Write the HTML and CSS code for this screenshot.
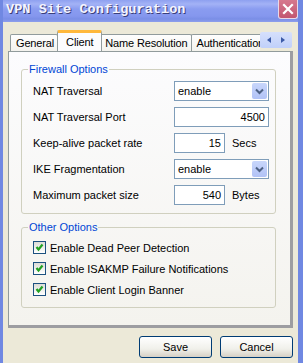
FILE: index.html
```html
<!DOCTYPE html>
<html lang="en">
<head>
    <meta charset="UTF-8">
    <title>VPN Site Configuration</title>
    <link rel="stylesheet" href="styles.css">
</head>
<body>
    <div class="window">
        <div class="titlebar">
            <span class="title">VPN Site Configuration</span>
            <span class="close">
                <svg width="12" height="12" viewBox="0 0 12 12"><path d="M2 2L10 10M10 2L2 10" stroke="#fff" stroke-width="2.2" stroke-linecap="square"/></svg>
            </span>
        </div>
        <div class="client">
            <div class="tabstrip">
                <div class="tablist">
                    <div class="tab first">General</div>
                    <div class="tab active">Client</div>
                    <div class="tab">Name Resolution</div>
                    <div class="tab">Authentication</div>
                </div>
                <div class="tabscroll">
                    <svg width="8" height="8" viewBox="0 0 8 8"><path d="M6 1L2 4L6 7Z" fill="#3b5aa8"/></svg>
                    <svg width="8" height="8" viewBox="0 0 8 8"><path d="M2 1L6 4L2 7Z" fill="#3b5aa8"/></svg>
                </div>
            </div>
            <div class="panel">
                <fieldset class="group">
                    <legend>Firewall Options</legend>
                    <div class="row">
                        <span class="label">NAT Traversal</span>
                        <div class="select">enable<span class="drop"><svg width="9" height="7" viewBox="0 0 9 7"><path d="M1 1.5L4.5 5L8 1.5" stroke="#4d6185" stroke-width="2" fill="none"/></svg></span></div>
                    </div>
                    <div class="row">
                        <span class="label">NAT Traversal Port</span>
                        <div class="field wide">4500</div>
                    </div>
                    <div class="row">
                        <span class="label">Keep-alive packet rate</span>
                        <div class="field short">15</div>
                        <span class="unit">Secs</span>
                    </div>
                    <div class="row">
                        <span class="label">IKE Fragmentation</span>
                        <div class="select">enable<span class="drop"><svg width="9" height="7" viewBox="0 0 9 7"><path d="M1 1.5L4.5 5L8 1.5" stroke="#4d6185" stroke-width="2" fill="none"/></svg></span></div>
                    </div>
                    <div class="row">
                        <span class="label">Maximum packet size</span>
                        <div class="field short">540</div>
                        <span class="unit">Bytes</span>
                    </div>
                </fieldset>
                <fieldset class="group other">
                    <legend>Other Options</legend>
                    <div class="check"><span class="box"><svg width="11" height="11" viewBox="0 0 11 11"><path d="M2.5 5L4.5 7.5L8.5 2.5" stroke="#21a121" stroke-width="2.2" fill="none"/></svg></span>Enable Dead Peer Detection</div>
                    <div class="check"><span class="box"><svg width="11" height="11" viewBox="0 0 11 11"><path d="M2.5 5L4.5 7.5L8.5 2.5" stroke="#21a121" stroke-width="2.2" fill="none"/></svg></span>Enable ISAKMP Failure Notifications</div>
                    <div class="check"><span class="box"><svg width="11" height="11" viewBox="0 0 11 11"><path d="M2.5 5L4.5 7.5L8.5 2.5" stroke="#21a121" stroke-width="2.2" fill="none"/></svg></span>Enable Client Login Banner</div>
                </fieldset>
            </div>
            <div class="buttons">
                <button type="button" class="btn">Save</button>
                <button type="button" class="btn cancel">Cancel</button>
            </div>
        </div>
    </div>
</body>
</html>
```

FILE: styles.css
```css
body {
    margin: 0;
    font-family: "Liberation Sans", Arial, sans-serif;
    font-size: 11px;
    color: #000;
    background-color: #ece9d8;
}
.window {
    width: 303px;
    height: 363px;
    box-sizing: border-box;
    border-left: 3px solid #7088e2;
    border-right: 5px solid #7088e2;
    background-color: #ece9d8;
    overflow: hidden;
}
.titlebar {
    height: 22px;
    margin-left: -3px;
    margin-right: -5px;
    display: flex;
    align-items: flex-start;
    justify-content: space-between;
    background: linear-gradient(#8ea0f0 0, #a3b2f6 4px, #8a9cf0 9px, #8597ee 16px, #7a8ee6 19px, #8e9fec 22px);
}
.title {
    padding: 3px 0 0 6px;
    font-family: "Liberation Mono", monospace;
    font-weight: bold;
    font-size: 13.6px;
    line-height: 14px;
    color: #f4f4ff;
    text-shadow: 1px 1px 0 #3a3f7a;
}
.close {
    width: 18px;
    height: 18px;
    margin: 0 5px 0 0;
    display: flex;
    align-items: center;
    justify-content: center;
    border: 1px solid #e8d8e8;
    border-top: none;
    border-radius: 0 0 3px 3px;
    background: linear-gradient(#d6788e, #c25670);
}
.client {
    padding: 7px 5px 0 5px;
}
.tabstrip {
    height: 22px;
    display: flex;
    align-items: flex-end;
    margin-left: 2px;
    margin-right: 1px;
    position: relative;
    z-index: 1;
}
.tablist {
    flex: 1;
    display: flex;
    align-items: flex-end;
    overflow: hidden;
    height: 22px;
}
.tab {
    flex: none;
    height: 17px;
    line-height: 17px;
    padding: 0 4px;
    box-sizing: border-box;
    border: 1px solid #919b9c;
    border-bottom: none;
    border-radius: 2px 2px 0 0;
    background: linear-gradient(#fefefe, #f4f3ee);
    margin-left: -1px;
    font-size: 11px;
    letter-spacing: -0.15px;
}
.tab.first {
    margin-left: 0;
    padding: 0 3px 0 5px;
}
.tab.active {
    height: 22px;
    line-height: 19px;
    padding: 0 8px;
    margin-left: -1px;
    margin-right: -1px;
    margin-bottom: -1px;
    background: #fcfcfe;
    border-top: 3px solid #ffb83c;
    position: relative;
    z-index: 2;
}
.tabscroll {
    flex: none;
    width: 32px;
    height: 16px;
    margin-bottom: 3px;
    display: flex;
    align-items: center;
    justify-content: center;
    gap: 6px;
    background: linear-gradient(#d6e0fc, #c0d0fa);
    border-radius: 2px;
}
.panel {
    box-sizing: border-box;
    height: 277px;
    padding: 11px 14px 0 12px;
    border: 1px solid #919b9c;
    border-right: 3px solid #9d9da1;
    border-bottom: 3px solid #9d9da1;
    background: linear-gradient(#fcfcfe, #f4f3ee);
}
.group {
    margin: 0;
    padding: 5px 0 8px 11px;
    border: 1px solid #d0d0bf;
    border-radius: 3px;
}
.group legend {
    padding: 0 1px;
    margin-left: -5px;
    line-height: 13px;
    color: #0046d5;
    font-size: 11px;
}
.row {
    display: flex;
    align-items: center;
    height: 20px;
    margin-bottom: 6px;
}
.row:last-child {
    margin-bottom: 0;
}
.label {
    width: 141px;
    flex: none;
}
.select, .field {
    box-sizing: border-box;
    height: 20px;
    border: 1px solid #7f9db9;
    background-color: #fff;
    line-height: 18px;
}
.select {
    width: 95px;
    padding-left: 3px;
    display: flex;
    justify-content: space-between;
}
.drop {
    width: 15px;
    height: 16px;
    margin: 1px;
    border-radius: 2px;
    display: flex;
    align-items: center;
    justify-content: center;
    background: linear-gradient(#c8d6fb, #b1c2f6);
}
.field {
    text-align: right;
    padding-right: 3px;
}
.field.wide {
    width: 95px;
}
.field.short {
    width: 51px;
}
.unit {
    margin-left: 7px;
}
.group.other {
    margin-top: 7px;
    padding: 7px 0 11px 11px;
}
.check {
    display: flex;
    align-items: center;
    height: 13px;
    margin-bottom: 8px;
}
.check:last-child {
    margin-bottom: 0;
}
.box {
    width: 13px;
    height: 13px;
    box-sizing: border-box;
    border: 1px solid #1c5180;
    background: linear-gradient(#dcdcd7, #fff);
    margin-right: 4px;
    display: flex;
    align-items: center;
    justify-content: center;
}
.buttons {
    display: flex;
    justify-content: flex-end;
    gap: 8px;
    margin-top: 8px;
}
.btn {
    width: 73px;
    height: 22px;
    padding: 0;
    border: 1px solid #003c74;
    border-radius: 3px;
    background: linear-gradient(#fff, #f0f0ea 60%, #d6d0c5);
    font-family: "Liberation Sans", Arial, sans-serif;
    font-size: 11px;
    color: #000;
}
```
